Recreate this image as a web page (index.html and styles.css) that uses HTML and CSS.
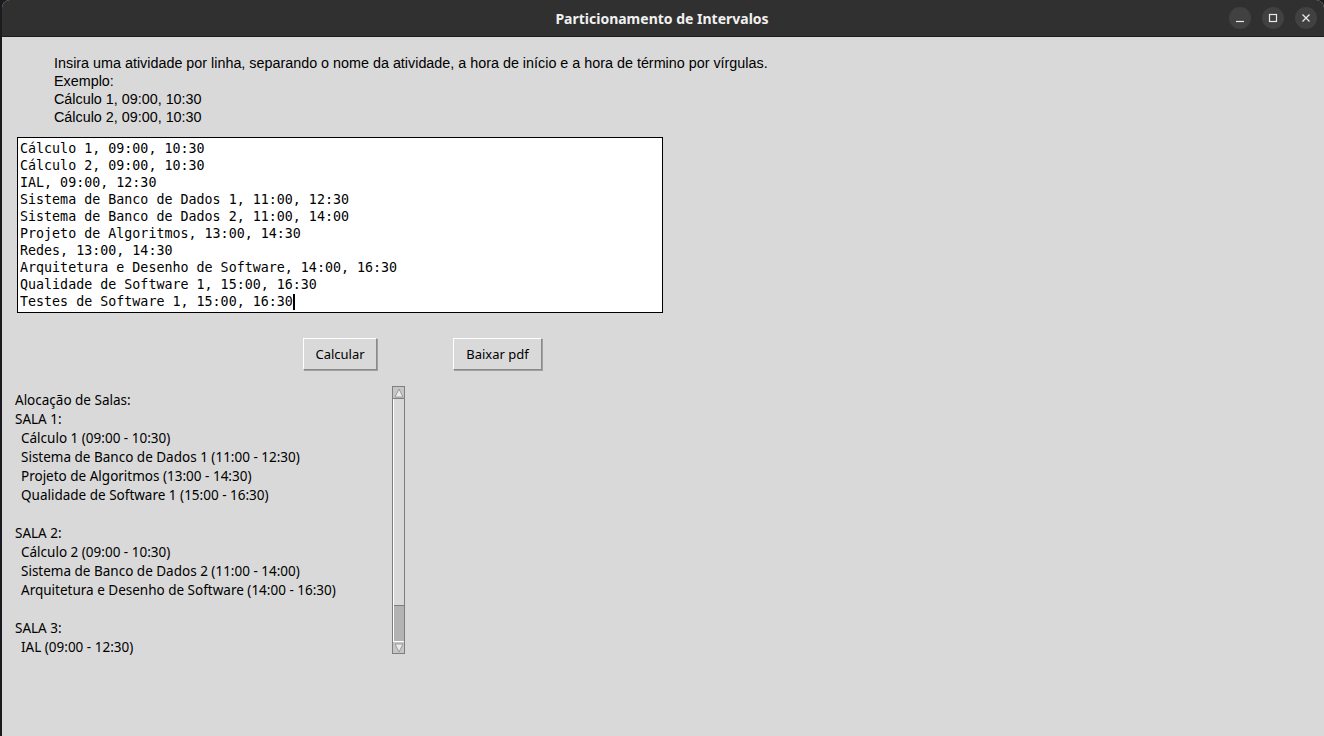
FILE: index.html
```html
<!DOCTYPE html>
<html lang="pt">
<head>
<meta charset="utf-8">
<title>Particionamento de Intervalos</title>
<link rel="stylesheet" href="styles.css">
</head>
<body>
<div class="window">
  <header class="titlebar">
    <div class="title">Particionamento de Intervalos</div>
    <div class="controls">
      <span class="wbtn"><svg width="10" height="10" viewBox="0 0 10 10"><path d="M1 8.5h8" stroke="#e8e8e8" stroke-width="1.2"/></svg></span>
      <span class="wbtn"><svg width="10" height="10" viewBox="0 0 10 10"><rect x="1.5" y="1.5" width="7" height="7" fill="none" stroke="#e8e8e8" stroke-width="1.2"/></svg></span>
      <span class="wbtn"><svg width="10" height="10" viewBox="0 0 10 10"><path d="M1.5 1.5l7 7M8.5 1.5l-7 7" stroke="#e8e8e8" stroke-width="1.3"/></svg></span>
    </div>
  </header>
  <main class="content">
    <div class="instructions">
      <div>Insira uma atividade por linha, separando o nome da atividade, a hora de início e a hora de término por vírgulas.</div>
      <div>Exemplo:</div>
      <div>Cálculo 1, 09:00, 10:30</div>
      <div>Cálculo 2, 09:00, 10:30</div>
    </div>
    <div class="editor">
      <div>Cálculo 1, 09:00, 10:30</div>
      <div>Cálculo 2, 09:00, 10:30</div>
      <div>IAL, 09:00, 12:30</div>
      <div>Sistema de Banco de Dados 1, 11:00, 12:30</div>
      <div>Sistema de Banco de Dados 2, 11:00, 14:00</div>
      <div>Projeto de Algoritmos, 13:00, 14:30</div>
      <div>Redes, 13:00, 14:30</div>
      <div>Arquitetura e Desenho de Software, 14:00, 16:30</div>
      <div>Qualidade de Software 1, 15:00, 16:30</div>
      <div>Testes de Software 1, 15:00, 16:30<span class="caret"></span></div>
    </div>
    <div class="actions">
      <button class="btn btn-calc">Calcular</button>
      <button class="btn btn-pdf">Baixar pdf</button>
    </div>
    <div class="output">
      <div class="result">
        <div>Alocação de Salas:</div>
        <div>SALA 1:</div>
        <div class="item">Cálculo 1 (09:00 - 10:30)</div>
        <div class="item">Sistema de Banco de Dados 1 (11:00 - 12:30)</div>
        <div class="item">Projeto de Algoritmos (13:00 - 14:30)</div>
        <div class="item">Qualidade de Software 1 (15:00 - 16:30)</div>
        <div class="blank"></div>
        <div>SALA 2:</div>
        <div class="item">Cálculo 2 (09:00 - 10:30)</div>
        <div class="item">Sistema de Banco de Dados 2 (11:00 - 14:00)</div>
        <div class="item">Arquitetura e Desenho de Software (14:00 - 16:30)</div>
        <div class="blank"></div>
        <div>SALA 3:</div>
        <div class="item">IAL (09:00 - 12:30)</div>
      </div>
      <div class="scrollbar">
        <div class="arrow arrow-up"><svg width="10" height="10" viewBox="0 0 10 10"><path d="M1 9L5 1L9 9Z" fill="#ebebeb" stroke="#8a8a8a" stroke-width="0.8"/></svg></div>
        <div class="trough"><div class="thumb"></div></div>
        <div class="arrow arrow-down"><svg width="10" height="10" viewBox="0 0 10 10"><path d="M1 1L5 9L9 1Z" fill="#ebebeb" stroke="#8a8a8a" stroke-width="0.8"/></svg></div>
      </div>
    </div>
  </main>
</div>
</body>
</html>
```

FILE: styles.css
```css
html, body {
  margin: 0;
  padding: 0;
  height: 100%;
  background: #1a1a1f;
}

.window {
  height: 736px;
  margin-left: 2px;
  background: #d9d9d9;
  display: flex;
  flex-direction: column;
  overflow: hidden;
  border-top-left-radius: 8px;
  border-top-right-radius: 8px;
}

.titlebar {
  height: 36px;
  flex: 0 0 36px;
  background: #303030;
  border-bottom: 1px solid #1c1c1c;
  display: flex;
  align-items: center;
  justify-content: center;
  position: relative;
}

.title {
  font-family: "Noto Sans", "DejaVu Sans", sans-serif;
  font-weight: 700;
  font-size: 14px;
  color: #f0f0f0;
  margin-left: -2px;
}

.controls {
  position: absolute;
  right: 7px;
  top: 7px;
  display: flex;
  gap: 11px;
}

.wbtn {
  width: 22px;
  height: 22px;
  border-radius: 50%;
  background: #414141;
  display: flex;
  align-items: center;
  justify-content: center;
}

.content {
  flex: 1;
  padding: 17px 0 0 13px;
  display: flex;
  flex-direction: column;
  align-items: flex-start;
}

.instructions {
  margin-left: 39px;
  font-family: "Liberation Sans", Arial, sans-serif;
  font-size: 14.35px;
  line-height: 18px;
  color: #000;
}

.editor {
  margin-top: 11px;
  margin-left: 2px;
  width: 642px;
  height: 172px;
  background: #fff;
  border: 1px solid #000;
  padding: 2px 0 0 2px;
  font-family: "DejaVu Sans Mono", monospace;
  font-size: 13.33px;
  line-height: 17px;
  color: #000;
  white-space: nowrap;
}

.caret {
  display: inline-block;
  width: 2px;
  height: 16px;
  background: #000;
  vertical-align: -4px;
}

.actions {
  margin-top: 25px;
  margin-left: 288px;
  display: flex;
  gap: 76px;
}

.btn {
  height: 32px;
  background: #d9d9d9;
  border: 1px solid;
  border-color: #ffffff #8a8a8a #8a8a8a #ffffff;
  box-shadow: 1px 1px 0 #a0a0a0;
  font-family: "Noto Sans", "Open Sans", sans-serif;
  font-size: 13px;
  color: #000;
  padding: 0;
}

.btn-calc { width: 74px; }
.btn-pdf { width: 89px; }

.output {
  margin-top: 16px;
  display: flex;
}

.result {
  width: 377px;
  padding-top: 5px;
  font-family: "Noto Sans", "Open Sans", sans-serif;
  font-size: 13.5px;
  line-height: 19px;
  color: #000;
}

.result .item { padding-left: 6px; }
.result .blank { height: 19px; }

.scrollbar {
  width: 11px;
  height: 266px;
  border: 1px solid #7e7e7e;
  background: #d9d9d9;
  display: flex;
  flex-direction: column;
}

.arrow {
  height: 11px;
  flex: 0 0 11px;
  background: #c6c6c6;
  display: flex;
  align-items: center;
  justify-content: center;
}

.arrow-up { border-bottom: 1px solid #7e7e7e; }
.arrow-down { border-top: 1px solid #fff; }

.trough {
  flex: 1;
  display: flex;
  flex-direction: column;
  justify-content: flex-end;
  border-left: 1px solid #fff;
}

.thumb {
  height: 35px;
  background: #b3b3b3;
  border-top: 1px solid #7e7e7e;
}
```
